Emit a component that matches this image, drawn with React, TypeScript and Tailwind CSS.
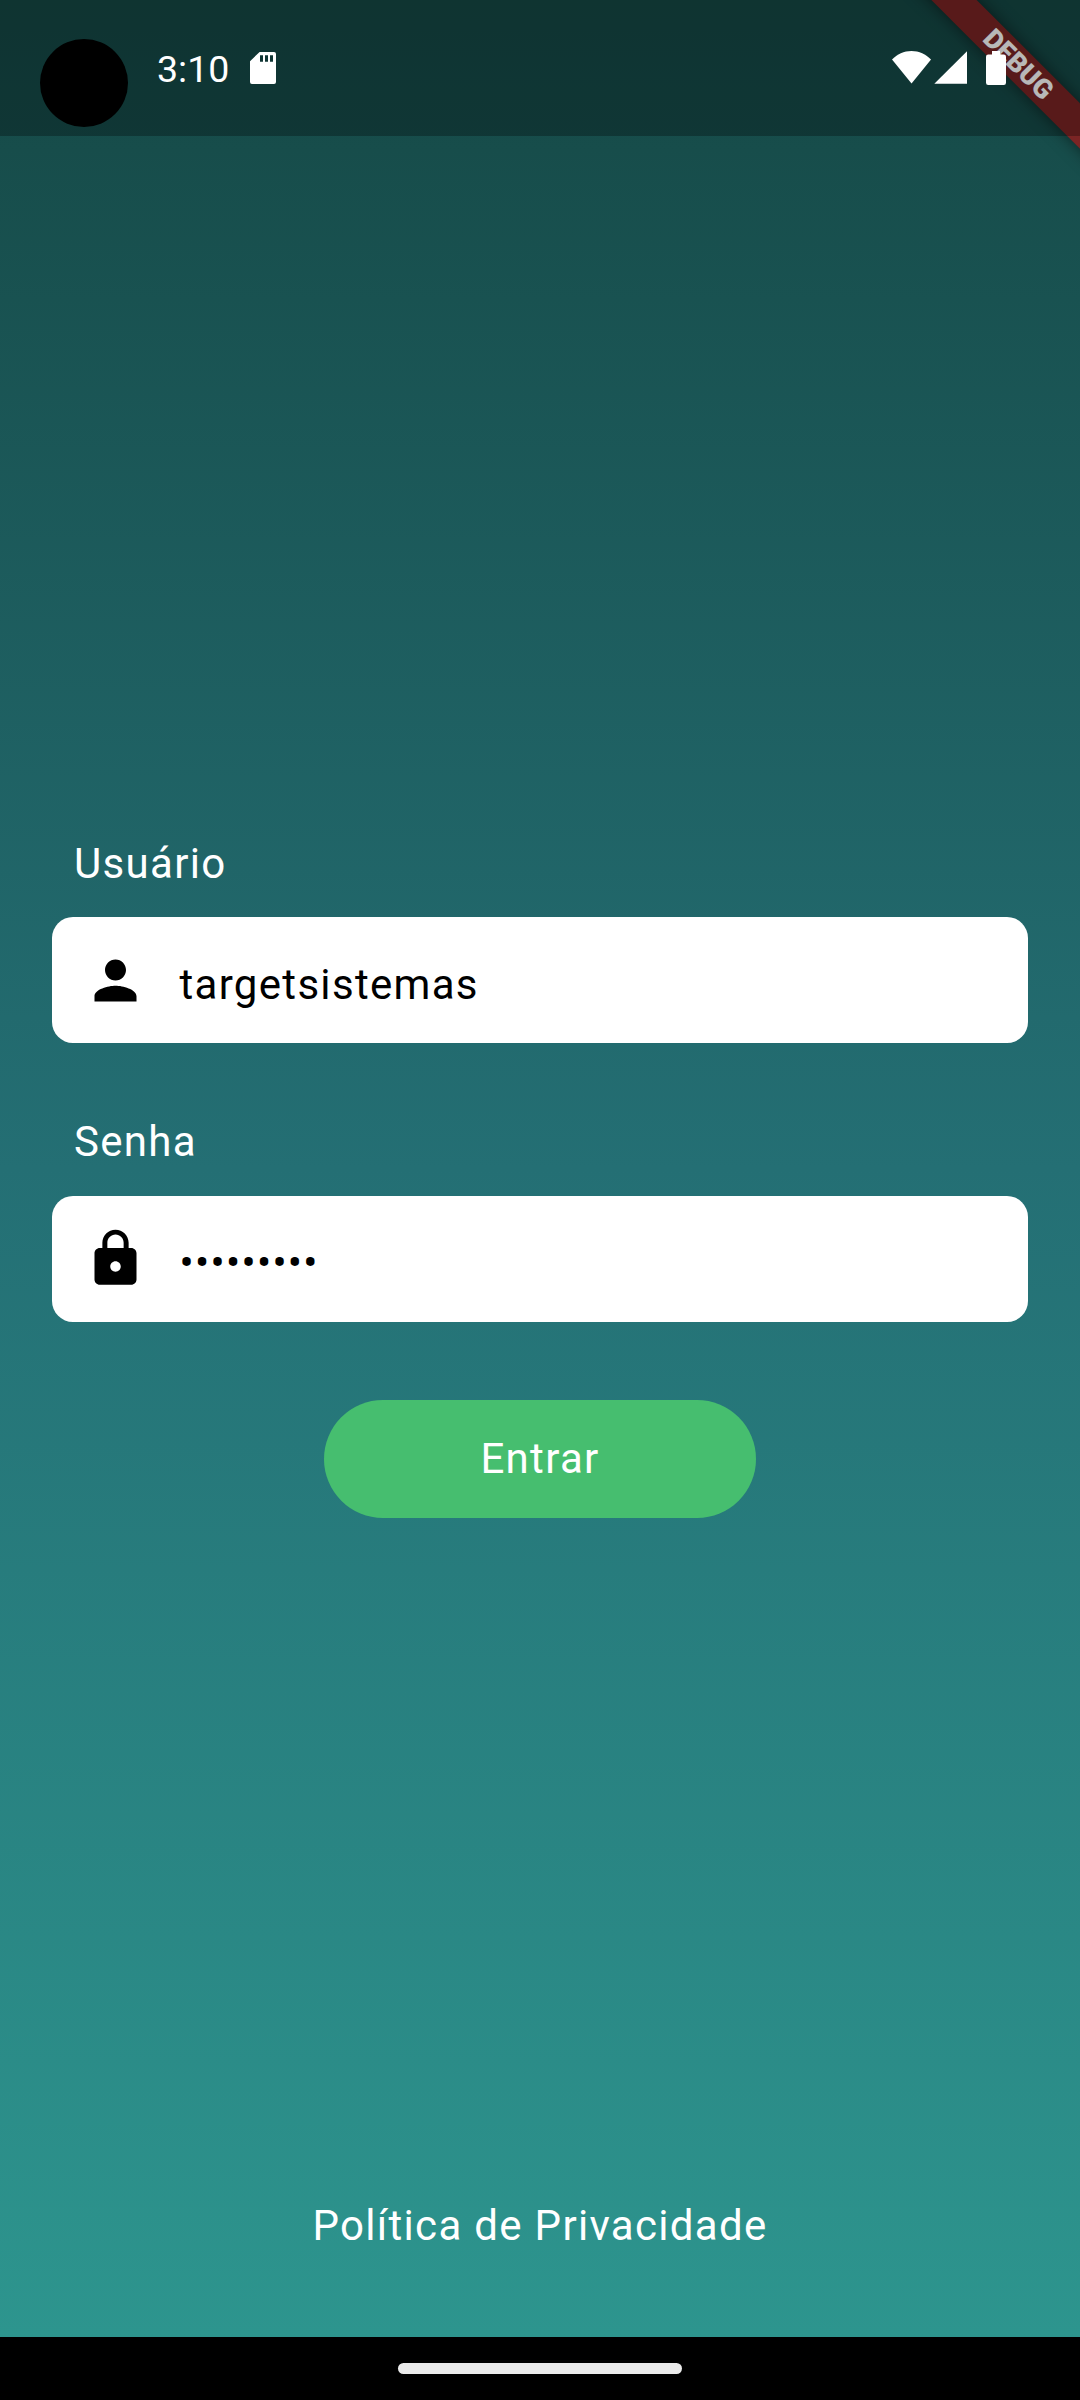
import type { ReactNode } from "react";

function StatusBar() {
  return (
    <header className="relative z-20 flex h-[136px] shrink-0 items-start bg-black/28 tracking-normal">
      <div className="mt-[39px] ml-[40px] size-[88px] shrink-0 rounded-full bg-black" />
      <span className="mt-[47px] ml-[29px] text-[37.5px] leading-[44px]">3:10</span>
      <svg className="mt-[52px] ml-[21px]" width="26" height="32" viewBox="0 0 26 32" fill="#fff">
        <path
          fillRule="evenodd"
          d="M9.6 0H24a2 2 0 0 1 2 2v28a2 2 0 0 1-2 2H2a2 2 0 0 1-2-2V9.200zM10 3.200v6.600h3V3.200zm5 0v6.600h3V3.200zm5 0v6.600h3V3.200z"
        />
      </svg>
      <div className="mt-[51px] mr-[74px] ml-auto flex items-start">
        <svg width="39" height="33" viewBox="0 0 39 33" fill="#fff">
          <path d="M0 8.6C5 3.2 12 0 19.5 0S34 3.2 39 8.6L19.5 32.6z" />
        </svg>
        <svg className="ml-[3px]" width="33" height="33" viewBox="0 0 33 33" fill="#fff">
          <path d="M.3 32.7H33V.2z" />
        </svg>
        <svg className="ml-[19px]" width="20" height="34" viewBox="0 0 20 34" fill="#fff">
          <path d="M6 0h8v3.5h3.8A2.2 2.2 0 0 1 20 5.700v26a2.200 2.200 0 0 1-2.200 2.200H2.200A2.200 2.200 0 0 1 0 31.700v-26a2.200 2.200 0 0 1 2.200-2.200H6z" />
        </svg>
      </div>
    </header>
  );
}

function DebugRibbon() {
  return (
    <div className="absolute top-0 right-0 size-[240px] overflow-hidden">
      <div className="absolute top-[46.750px] left-[17.250px] flex h-[32px] w-[320px] rotate-45 items-center justify-center bg-[#7b2525] pl-[4px] text-[27px] leading-none font-black tracking-normal shadow-[0_0_16px_rgba(0,0,0,0.5)]">
        DEBUG
      </div>
    </div>
  );
}

function Field({ label, icon, children }: { label: string; icon: ReactNode; children: ReactNode }) {
  return (
    <div className="flex flex-col">
      <label className="ml-[22px] h-[50px] leading-[50px]">{label}</label>
      <div className="mt-[28.5px] flex h-[126px] items-center rounded-[21px] bg-white pl-[32px] text-black">
        {icon}
        {children}
      </div>
    </div>
  );
}

export default function App() {
  return (
    <div className="relative flex h-[2400px] w-[1080px] flex-col overflow-hidden bg-[linear-gradient(180deg,#154845_0px,#246f74_1168px,#2d958e_2337px)] font-['Roboto',sans-serif] text-[42px] tracking-[1.31px] text-white">
      <DebugRibbon />
      <StatusBar />
      <main className="flex flex-1 flex-col px-[52px] pt-[702.9px]">
        <Field
          label="Usuário"
          icon={
            <svg className="size-[63px]" viewBox="0 0 24 24">
              <path d="M12 12c2.210 0 4-1.790 4-4s-1.790-4-4-4-4 1.790-4 4 1.790 4 4 4zm0 2c-2.670 0-8 1.340-8 4v2h16v-2c0-2.660-5.330-4-8-4z" />
            </svg>
          }
        >
          <span className="mt-[8.5px] ml-[32.5px]">targetsistemas</span>
        </Field>
        <div className="h-[73.9px] shrink-0" />
        <Field
          label="Senha"
          icon={
            <svg className="size-[63px]" viewBox="0 0 24 24">
              <path d="M18 8h-1V6c0-2.760-2.240-5-5-5S7 3.240 7 6v2H6c-1.100 0-2 .9-2 2v10c0 1.100.9 2 2 2h12c1.100 0 2-.9 2-2V10c0-1.100-.9-2-2-2zm-6 9c-1.100 0-2-.9-2-2s.9-2 2-2 2 .9 2 2-.9 2-2 2zm3.100-9H8.900V6c0-1.710 1.390-3.100 3.100-3.100 1.710 0 3.100 1.390 3.100 3.100v2z" />
            </svg>
          }
        >
          <span className="mt-[7px] ml-[32.5px]">•••••••••</span>
        </Field>
        <button className="mt-[78.5px] flex h-[118px] w-[432px] items-center justify-center self-center rounded-full bg-[#46be6f] pb-[2px]">
          Entrar
        </button>
        <a className="mt-auto mb-[86px] self-center leading-[50px]">Política de Privacidade</a>
      </main>
      <footer className="flex h-[63px] shrink-0 justify-center bg-black pt-[26px]">
        <div className="h-[11px] w-[284px] rounded-full bg-[#ebebeb]" />
      </footer>
    </div>
  );
}
